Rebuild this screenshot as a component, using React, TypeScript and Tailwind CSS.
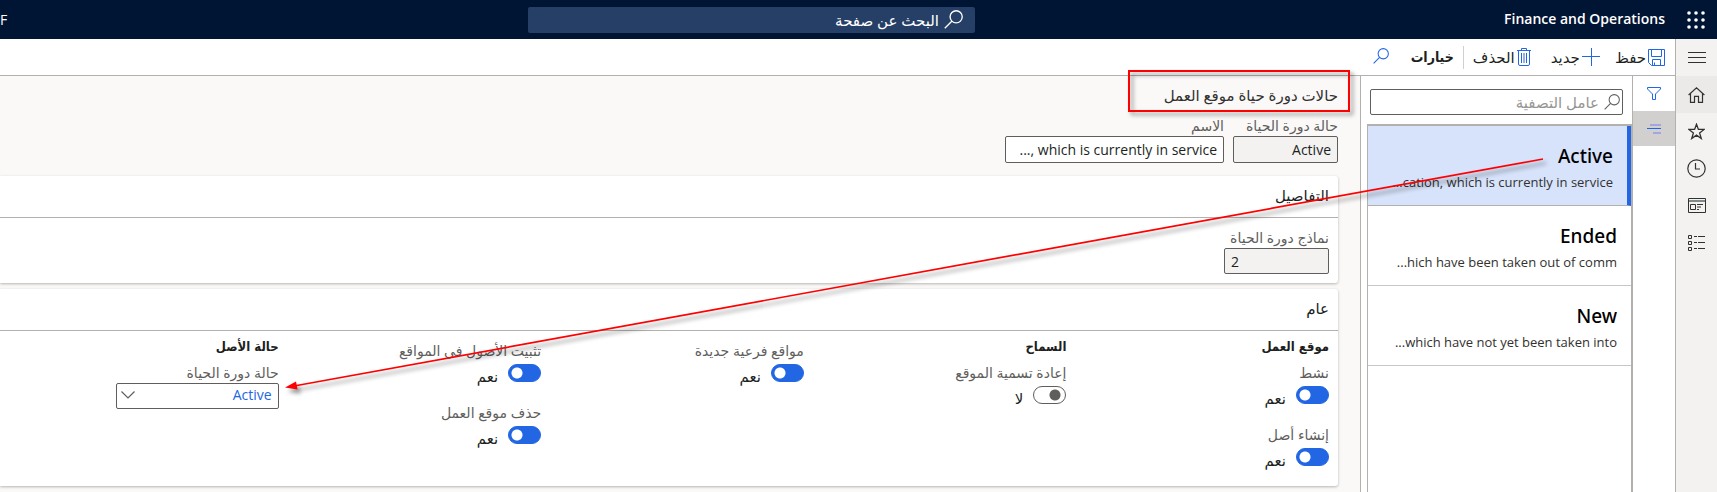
import type { ReactNode } from "react";

type IconProps = { className?: string };

function SearchIcon({ className = "" }: IconProps) {
  return (
    <svg viewBox="0 0 20 20" fill="none" stroke="currentColor" className={className} aria-hidden="true">
      <circle cx="12.8" cy="7.2" r="6.4" />
      <path d="M8.200 11.800 .8 19.200" />
    </svg>
  );
}

function WaffleIcon() {
  return (
    <svg width="18" height="18" viewBox="0 0 18 18" fill="currentColor" aria-hidden="true">
      {[2, 9, 16].map((y) => [2, 9, 16].map((x) => <circle key={`${x}-${y}`} cx={x} cy={y} r="1.8" />))}
    </svg>
  );
}

function SaveIcon() {
  return (
    <svg width="17" height="17" viewBox="0 0 17 17" fill="none" stroke="currentColor" aria-hidden="true">
      <path d="M.5 .5h16v16h-13l-3-3z" />
      <path d="M3.5 .5v7h10v-7M4.500 16.500v-6h8v6M6.500 16.500v-3" />
    </svg>
  );
}

function PlusIcon() {
  return (
    <svg width="18" height="18" viewBox="0 0 18 18" fill="none" stroke="currentColor" aria-hidden="true">
      <path d="M9.500 0v18M0 8.500h18" />
    </svg>
  );
}

function TrashIcon() {
  return (
    <svg width="14" height="18" viewBox="0 0 14 18" fill="none" stroke="currentColor" aria-hidden="true">
      <path d="M0 2.500h14M4.500 2.500v-2h5v2M1.500 2.500v13.500q0 1.500 1.500 1.500h8q1.500 0 1.500-1.500v-13.500M4.500 5v10M7 5v10M9.500 5v10" />
    </svg>
  );
}

function FunnelIcon() {
  return (
    <svg width="14" height="13" viewBox="0 0 14 13" fill="none" stroke="currentColor" aria-hidden="true">
      <path d="M.5 .5h13v1.500l-5 5v5.500h-3v-5.500l-5-5z" />
    </svg>
  );
}

function LinesIcon() {
  return (
    <svg width="14" height="10" viewBox="0 0 14 10" fill="none" aria-hidden="true">
      <path d="M3 1h11M6 9h8" stroke="#a5a5e0" strokeWidth="2" />
      <path d="M0 4.500h14" stroke="#2266e3" />
    </svg>
  );
}

function MenuIcon() {
  return (
    <svg width="18" height="11" viewBox="0 0 18 11" fill="none" stroke="currentColor" aria-hidden="true">
      <path d="M0 .5h18M0 5.500h18M0 10.500h18" />
    </svg>
  );
}

function HomeIcon() {
  return (
    <svg width="17" height="16" viewBox="0 0 17 16" fill="none" stroke="currentColor" strokeWidth="1.200" aria-hidden="true">
      <path d="M.6 8 8.500.9 16.400 8M2.500 6.500v8.900h4v-6h4v6h4v-8.900" />
    </svg>
  );
}

function StarIcon() {
  return (
    <svg width="17" height="17" viewBox="0 0 17 17" fill="none" stroke="currentColor" strokeWidth="1.300" aria-hidden="true">
      <path d="m8.500 1.200 1.900 5.200h5.700l-4.500 3.500 1.700 5.600-4.800-3.400-4.800 3.400 1.700-5.600-4.500-3.500h5.700z" />
    </svg>
  );
}

function ClockIcon() {
  return (
    <svg width="19" height="19" viewBox="0 0 19 19" fill="none" stroke="currentColor" strokeWidth="1.200" aria-hidden="true">
      <circle cx="9.500" cy="9.500" r="8.700" />
      <path d="M8.500 4v6h4.500" />
    </svg>
  );
}

function WorkspaceIcon() {
  return (
    <svg width="18" height="15" viewBox="0 0 18 15" fill="none" stroke="currentColor" aria-hidden="true">
      <path d="M.5 .5h17v14h-17z" />
      <path d="M1 3h16" stroke="#7d8a8a" strokeWidth="2" />
      <path d="M2.500 6.500h5v5h-5zM9 6.500h6M9 9h4M9 11.500h2" />
    </svg>
  );
}

function ModulesIcon() {
  return (
    <svg width="17" height="16" viewBox="0 0 17 16" fill="none" stroke="currentColor" aria-hidden="true">
      <path d="M.5 .5h3v3h-3zM.5 6.500h3v3h-3zM.5 12.500h3v3h-3zM6 1.500h3M10 1.500h7M6 7.500h3M10 7.500h7M6 13.500h3M10 13.500h7" />
    </svg>
  );
}

function RailButton({ label, className = "", children }: { label: string; className?: string; children: ReactNode }) {
  return (
    <button aria-label={label} className={`flex h-[37px] w-full items-center justify-center ${className}`}>
      {children}
    </button>
  );
}

const records = [
  { name: "Active", note: "...cation, which is currently in service", selected: true },
  { name: "Ended", note: "...hich have been taken out of comm", selected: false },
  { name: "New", note: "...which have not yet been taken into", selected: false },
];

function Toggle({ id, label, on = true }: { id: string; label: string; on?: boolean }) {
  return (
    <div>
      <label htmlFor={id} className="block text-[14px] leading-[20px] whitespace-nowrap text-[#605e5c]">
        {label}
      </label>
      <div className="mt-[3px] flex h-[18px] items-start gap-[10px]">
        <span className="flex h-[18px] w-[33px] shrink-0">
          <input
            id={id}
            type="checkbox"
            role="switch"
            defaultChecked={on}
            className="h-[18px] w-[33px] appearance-none rounded-full border border-[#605e5c] bg-[radial-gradient(circle_at_21px_8px,#605e5c_5px,transparent_6px)] checked:border-[#2266e3] checked:bg-[#2266e3] checked:bg-[radial-gradient(circle_at_8px_8px,#ffffff_5px,transparent_6px)]"
          />
        </span>
        <span className="pt-[2px] text-[15px] leading-[20px] text-[#201f1e]">{on ? "نعم" : "لا"}</span>
      </div>
    </div>
  );
}

function Card({ title, children }: { title: string; children: ReactNode }) {
  return (
    <section className="rounded-s-[3px] bg-white shadow-[0_1px_3px_rgba(0,0,0,0.28)]">
      <h2 className="flex h-[42px] items-center border-b border-[#b3b0ad] ps-[9px] pb-[3px] text-[15px] leading-[20px] font-medium">
        {title}
      </h2>
      {children}
    </section>
  );
}

const fieldLabel = "block text-[14px] leading-[20px] whitespace-nowrap text-[#605e5c]";
const groupTitle =
  "mb-[6px] font-['DejaVu_Sans_Condensed','DejaVu_Sans',sans-serif] text-[13px] leading-[20px] font-bold text-[#201f1e]";

export default function App() {
  return (
    <div
      dir="rtl"
      className="relative flex min-h-screen flex-col overflow-hidden bg-[#faf9f8] font-['Open_Sans','DejaVu_Sans',sans-serif] text-[#201f1e]"
    >
      <header className="grid h-[39px] grid-cols-[742fr_447px_528fr] items-center bg-[#001433] text-white">
        <div className="flex items-center gap-[10px]">
          <button aria-label="مشغل التطبيقات" className="flex w-[42px] justify-center">
            <WaffleIcon />
          </button>
          <span className="pb-[2px] text-[14px] font-semibold">Finance and Operations</span>
        </div>
        <label className="flex h-[26px] items-center gap-[5px] rounded-[2px] bg-[#263f66] ps-[12px]">
          <SearchIcon className="h-[19px] w-[19px] stroke-[1.4]" />
          <input
            type="search"
            aria-label="البحث عن صفحة"
            placeholder="البحث عن صفحة"
            className="min-w-0 flex-1 bg-transparent text-[15px] leading-[20px] outline-none placeholder:text-white"
          />
        </label>
        <span dir="ltr" className="text-left text-[14px] leading-[20px]">
          F
        </span>
      </header>

      <div className="flex flex-1">
        <nav className="flex w-[42px] shrink-0 flex-col border-e border-[#b3b0ad] bg-[#f3f2f1] text-[#323130]">
          <RailButton label="القائمة">
            <MenuIcon />
          </RailButton>
          <RailButton label="الصفحة الرئيسية" className="bg-[#ebeae9]">
            <HomeIcon />
          </RailButton>
          <RailButton label="المفضلة">
            <StarIcon />
          </RailButton>
          <RailButton label="الأخيرة">
            <ClockIcon />
          </RailButton>
          <RailButton label="مساحات العمل">
            <WorkspaceIcon />
          </RailButton>
          <RailButton label="الوحدات النمطية">
            <ModulesIcon />
          </RailButton>
        </nav>

        <div className="flex min-w-0 flex-1 flex-col">
          <div className="flex h-[37px] shrink-0 items-center border-b border-[#b3b0ad] bg-white ps-[10px] text-[15px] leading-[20px]">
            <button className="flex items-center gap-[2px]">
              <span className="text-[#2266e3]">
                <SaveIcon />
              </span>
              حفظ
            </button>
            <button className="ms-[15px] flex items-center gap-[2px]">
              <span className="text-[#2266e3]">
                <PlusIcon />
              </span>
              جديد
            </button>
            <button className="ms-[20px] flex items-center gap-[2px]">
              <span className="text-[#2266e3]">
                <TrashIcon />
              </span>
              الحذف
            </button>
            <span className="mx-[9px] h-[23px] w-px bg-[#d2d0ce]" />
            <button className="font-['DejaVu_Sans_Condensed','DejaVu_Sans',sans-serif] text-[14px] font-bold">خيارات</button>
            <button aria-label="بحث" className="ms-[22px] mb-[2px] text-[#2266e3]">
              <SearchIcon className="h-[16px] w-[16px] stroke-[1.3]" />
            </button>
          </div>

          <div className="flex flex-1">
            <div className="flex w-[43px] shrink-0 flex-col border-e border-[#b3b0ad] bg-white text-[#2266e3]">
              <button aria-label="عامل التصفية" className="flex h-[35px] items-center justify-center">
                <FunnelIcon />
              </button>
              <button aria-label="قائمة" className="flex h-[35px] items-center justify-center bg-[#d2d0ce]">
                <LinesIcon />
              </button>
            </div>

            <aside className="flex w-[272px] shrink-0 flex-col border-e border-[#b3b0ad] bg-white">
              <label className="ms-[9px] me-[9px] mt-[13px] flex h-[26px] items-center gap-[5px] rounded-[2px] border border-[#605e5c] ps-[2px] text-[#605e5c]">
                <SearchIcon className="h-[16px] w-[16px] stroke-[1.3]" />
                <input
                  type="search"
                  aria-label="عامل التصفية"
                  placeholder="عامل التصفية"
                  className="min-w-0 flex-1 bg-transparent text-[15px] leading-[20px] outline-none placeholder:text-[#979593]"
                />
              </label>
              <ul className="me-[6px] mt-[9px] flex-1 border-x border-t-2 border-[#b3b0ad]">
                {records.map((r) => (
                  <li
                    key={r.name}
                    className={
                      r.selected
                        ? "border-b border-s-4 border-b-[#b3b0ad] border-s-[#2266e3] bg-[#d7e3fb]"
                        : "border-b border-b-[#c8c6c4]"
                    }
                  >
                    <button dir="ltr" className="flex h-[79px] w-full flex-col items-end justify-center pe-[14px] pt-[7px] whitespace-nowrap">
                      <span className="font-['Noto_Sans','Open_Sans',sans-serif] text-[19px] leading-[26px] font-medium text-black">
                        {r.name}
                      </span>
                      <span className="text-[13px] leading-[26px] text-[#323130]">{r.note}</span>
                    </button>
                  </li>
                ))}
              </ul>
            </aside>

            <main className="min-w-0 flex-1 ps-[22px]">
              <div className="flex h-[40px] items-center pb-[2px]">
                <h1 className="relative text-[15px] leading-[20px] text-[#323130]">
                  حالات دورة حياة موقع العمل
                  <span className="absolute -top-[15px] -right-[12px] h-[42px] w-[222px] border-2 border-[#ff0000] drop-shadow-[3px_3px_2px_rgba(0,0,0,0.45)]" />
                </h1>
              </div>

              <div className="flex gap-[9px]">
                <div className="w-[105px]">
                  <label htmlFor="state" className={fieldLabel}>
                    حالة دورة الحياة
                  </label>
                  <input
                    id="state"
                    dir="ltr"
                    readOnly
                    value="Active"
                    className="h-[27px] w-full rounded-[2px] border border-[#605e5c] bg-[#f3f2f1] px-[6px] text-right text-[14px] text-[#201f1e]"
                  />
                </div>
                <div className="w-[219px]">
                  <label htmlFor="name" className={fieldLabel}>
                    الاسم
                  </label>
                  <input
                    id="name"
                    dir="ltr"
                    defaultValue="..., which is currently in service"
                    className="h-[27px] w-full rounded-[2px] border border-[#605e5c] bg-white px-[6px] text-right text-[14px] text-[#201f1e]"
                  />
                </div>
              </div>

              <div className="mt-[13px] flex flex-col gap-[6px]">
                <Card title="التفاصيل">
                  <div className="px-[9px] pt-[10px] pb-[9px]">
                    <label htmlFor="models" className={fieldLabel}>
                      نماذج دورة الحياة
                    </label>
                    <input
                      id="models"
                      dir="ltr"
                      readOnly
                      value="2"
                      className="block h-[26px] w-[105px] rounded-[2px] border border-[#605e5c] bg-[#f3f2f1] px-[6px] text-left text-[14px] text-[#201f1e]"
                    />
                  </div>
                </Card>

                <Card title="عام">
                  <div className="grid grid-cols-5 ps-[9px] pe-[16px] pt-[6px] pb-[20px]">
                    <div>
                      <h3 className={groupTitle}>موقع العمل</h3>
                      <div className="flex flex-col gap-[21px]">
                        <Toggle id="active" label="نشط" />
                        <Toggle id="create-asset" label="إنشاء أصل" />
                      </div>
                    </div>
                    <div>
                      <h3 className={groupTitle}>السماح</h3>
                      <Toggle id="rename" label="إعادة تسمية الموقع" on={false} />
                    </div>
                    <div className="pt-[4px]">
                      <Toggle id="sub-locations" label="مواقع فرعية جديدة" />
                    </div>
                    <div className="flex flex-col gap-[21px] pt-[4px]">
                      <Toggle id="install" label="تثبيت الأصول في المواقع" />
                      <Toggle id="delete" label="حذف موقع العمل" />
                    </div>
                    <div>
                      <h3 className={groupTitle}>حالة الأصل</h3>
                      <label htmlFor="asset-state" className={fieldLabel}>
                        حالة دورة الحياة
                      </label>
                      <div className="relative w-[163px]">
                        <select
                          id="asset-state"
                          className="block h-[26px] w-full appearance-none rounded-[2px] border border-[#605e5c] bg-white px-[6px] pb-[2px] text-[14px] leading-[20px] text-[#2266e3]"
                        >
                          <option>Active</option>
                          <option>Ended</option>
                          <option>New</option>
                        </select>
                        <svg
                          viewBox="0 0 14 8"
                          fill="none"
                          stroke="#605e5c"
                          strokeWidth="1.200"
                          className="pointer-events-none absolute top-[8px] left-[5px] h-[8px] w-[14px]"
                          aria-hidden="true"
                        >
                          <path d="m.5 .5 6.500 6.500 6.500-6.500" />
                        </svg>
                      </div>
                    </div>
                  </div>
                </Card>
              </div>
            </main>
          </div>
        </div>
      </div>

      <svg
        viewBox="0 0 1717 492"
        className="pointer-events-none absolute top-0 right-0 h-[492px] w-[1717px] drop-shadow-[3px_4px_2px_rgba(0,0,0,0.45)]"
        aria-hidden="true"
      >
        <path d="M1543 159 294 386" stroke="#ff0000" strokeWidth="1.700" />
        <path d="m285 387.500 11-6 1.500 8z" fill="#ff0000" />
      </svg>
    </div>
  );
}
